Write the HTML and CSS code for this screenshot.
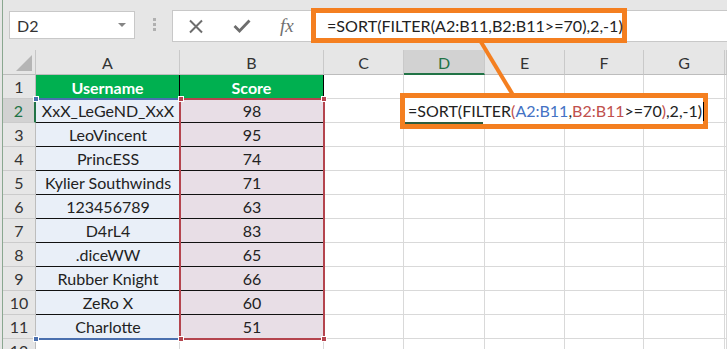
FILE: index.html
```html
<!DOCTYPE html>
<html lang="en">
<head>
    <meta charset="UTF-8">
    <title>SORT FILTER</title>
    <link rel="stylesheet" href="styles.css">
</head>
<body>
    <div class="app">
        <!-- name box + formula bar -->
        <div class="toolbar">
            <div class="name-box">
                <span>D2</span>
                <span class="caret"></span>
            </div>
            <div class="grip"><i></i><i></i><i></i></div>
            <div class="formula-bar">
                <div class="fx-tools">
                    <svg width="16" height="15" viewBox="0 0 16 15"><path d="M2 1.5 L14 13.5 M14 1.5 L2 13.5" stroke="#6d6d6d" stroke-width="2" fill="none"/></svg>
                    <svg width="18" height="14" viewBox="0 0 18 14"><path d="M1.5 7 L6.5 12 L16.5 1.5" stroke="#6d6d6d" stroke-width="2.8" fill="none"/></svg>
                    <span class="fx">fx</span>
                </div>
                <div class="formula-box">=SORT(FILTER(A2:B11,B2:B11&gt;=70),2,-1)</div>
            </div>
        </div>

        <!-- worksheet -->
        <div class="sheet">
            <div class="grid">
                <div class="corner"><span class="tri"></span></div>
                <div class="ch">A</div><div class="ch">B</div><div class="ch">C</div>
                <div class="ch sel">D</div><div class="ch">E</div><div class="ch">F</div><div class="ch">G</div><div class="ch"></div>

                <div class="rh">1</div>
                <div class="head">Username</div><div class="head">Score</div>
                <div class="c"></div><div class="c"></div><div class="c"></div><div class="c"></div><div class="c"></div><div class="c"></div>

                <div class="rh sel">2</div>
                <div class="name">XxX_LeGeND_XxX</div><div class="score">98</div>
                <div class="c"></div><div class="c"></div><div class="c"></div><div class="c"></div><div class="c"></div><div class="c"></div>

                <div class="rh">3</div>
                <div class="name">LeoVincent</div><div class="score">95</div>
                <div class="c"></div><div class="c"></div><div class="c"></div><div class="c"></div><div class="c"></div><div class="c"></div>

                <div class="rh">4</div>
                <div class="name">PrincESS</div><div class="score">74</div>
                <div class="c"></div><div class="c"></div><div class="c"></div><div class="c"></div><div class="c"></div><div class="c"></div>

                <div class="rh">5</div>
                <div class="name">Kylier Southwinds</div><div class="score">71</div>
                <div class="c"></div><div class="c"></div><div class="c"></div><div class="c"></div><div class="c"></div><div class="c"></div>

                <div class="rh">6</div>
                <div class="name">123456789</div><div class="score">63</div>
                <div class="c"></div><div class="c"></div><div class="c"></div><div class="c"></div><div class="c"></div><div class="c"></div>

                <div class="rh">7</div>
                <div class="name">D4rL4</div><div class="score">83</div>
                <div class="c"></div><div class="c"></div><div class="c"></div><div class="c"></div><div class="c"></div><div class="c"></div>

                <div class="rh">8</div>
                <div class="name">.diceWW</div><div class="score">65</div>
                <div class="c"></div><div class="c"></div><div class="c"></div><div class="c"></div><div class="c"></div><div class="c"></div>

                <div class="rh">9</div>
                <div class="name">Rubber Knight</div><div class="score">66</div>
                <div class="c"></div><div class="c"></div><div class="c"></div><div class="c"></div><div class="c"></div><div class="c"></div>

                <div class="rh">10</div>
                <div class="name">ZeRo X</div><div class="score">60</div>
                <div class="c"></div><div class="c"></div><div class="c"></div><div class="c"></div><div class="c"></div><div class="c"></div>

                <div class="rh">11</div>
                <div class="name">Charlotte</div><div class="score">51</div>
                <div class="c"></div><div class="c"></div><div class="c"></div><div class="c"></div><div class="c"></div><div class="c"></div>

                <div class="rh">12</div>
                <div class="c"></div><div class="c"></div>
                <div class="c"></div><div class="c"></div><div class="c"></div><div class="c"></div><div class="c"></div><div class="c"></div>
            </div>

            <!-- range highlights while editing -->
            <div class="ref ref-blue">
                <span class="handle tl"></span><span class="handle bl"></span>
            </div>
            <div class="ref ref-red">
                <span class="handle tl"></span><span class="handle tr"></span>
                <span class="handle bl"></span><span class="handle br"></span>
            </div>
        </div>

        <!-- callout -->
        <svg class="connector" width="727" height="349"><line x1="481" y1="42" x2="513" y2="95" stroke="#f47f20" stroke-width="4"/></svg>
        <div class="edit-box">
            <div class="edit-text">=SORT(FILTER<span class="r">(</span><span class="b">A2:B11</span>,<span class="r">B2:B11</span>&gt;=70<span class="r">)</span>,2,-1)<span class="cursor"></span></div>
        </div>
    </div>
</body>
</html>
```

FILE: styles.css
```css
* {
    margin: 0;
    padding: 0;
    box-sizing: border-box;
}

body {
    overflow: hidden;
    background: #ffffff;
    font-family: "Lato", "Liberation Sans", sans-serif;
    color: #222;
}

.app {
    position: relative;
    width: 727px;
    height: 349px;
    padding-left: 3px;
    background: linear-gradient(to right, #e6e6e6 0, #e6e6e6 2px, #8aa790 2px, #8aa790 3px, transparent 3px);
    overflow: hidden;
}

/* toolbar */
.toolbar {
    display: flex;
    align-items: flex-start;
    height: 50px;
    padding-left: 6px;
    background: #e6e6e6;
}

.name-box {
    display: flex;
    align-items: center;
    justify-content: space-between;
    width: 126px;
    height: 28px;
    margin-top: 11px;
    padding: 0 8px 0 7px;
    background: #fff;
    border: 1px solid #c8c8c8;
    font-size: 16px;
    color: #333;
}

.caret {
    width: 0;
    height: 0;
    border-left: 4px solid transparent;
    border-right: 4px solid transparent;
    border-top: 4px solid #858585;
}

.grip {
    display: flex;
    flex-direction: column;
    gap: 2px;
    margin: 18px 0 0 18px;
}

.grip i {
    display: block;
    width: 3px;
    height: 3px;
    background: #b0b0b0;
}

.formula-bar {
    display: flex;
    align-items: center;
    flex: 1;
    height: 32px;
    margin: 10px 0 0 16px;
    background: #fff;
    border: 1px solid #c8c8c8;
    border-right: none;
}

.fx-tools {
    display: flex;
    align-items: center;
    width: 138px;
    padding-left: 15px;
    gap: 29px;
}

.fx {
    font-family: "Liberation Serif", serif;
    font-style: italic;
    font-size: 19px;
    color: #707070;
}

.formula-box {
    height: 35px;
    margin: -2px 0 -1px 0;
    padding: 0 0 0 11px;
    width: 316px;
    border: 5px solid #f47f20;
    background: #fff;
    font-size: 16.1px;
    line-height: 25px;
    color: #222;
    white-space: nowrap;
}

/* sheet */
.sheet {
    position: relative;
}

.grid {
    display: grid;
    grid-template-columns: 33px 144px 144px 80px 81px 80px 79px 81px 2px;
    grid-template-rows: 25px repeat(12, 24px);
    font-size: 16px;
}

.grid > div {
    display: flex;
    align-items: center;
    justify-content: center;
    white-space: nowrap;
    overflow: hidden;
}

.corner {
    position: relative;
    background: #e6e6e6;
    border-right: 1px solid #c6c6c6;
    border-bottom: 1px solid #bdbdbd;
}

.tri {
    position: absolute;
    right: 3px;
    bottom: 3px;
    width: 0;
    height: 0;
    border-left: 16px solid transparent;
    border-bottom: 16px solid #b5b5b5;
}

.ch {
    background: #e6e6e6;
    border-right: 1px solid #c9c9c9;
    border-bottom: 1px solid #bdbdbd;
    color: #333;
    padding-top: 1px;
}

.ch.sel {
    background: #d2d2d2;
    color: #217346;
    border-bottom: 2px solid #217346;
}

.rh {
    background: #e6e6e6;
    border-right: 1px solid #bdbdbd;
    border-bottom: 1px solid #cbcbcb;
    color: #333;
}

.rh.sel {
    background: #d2d2d2;
    color: #217346;
    border-right: 2px solid #217346;
}

.c {
    border-right: 1px solid #d9d9d9;
    border-bottom: 1px solid #d9d9d9;
}

.head {
    background: #00b050;
    color: #fff;
    font-weight: bold;
    border-right: 1px solid #000;
}

.name,
.score {
    border-bottom: 1px solid #111;
    color: #222;
}

.name {
    background: #e9eff8;
}

.score {
    background: #e8dee6;
}

/* reference ranges */
.ref {
    position: absolute;
    pointer-events: none;
}

.ref-blue {
    left: 33px;
    top: 48px;
    width: 146px;
    height: 242px;
    border-top: 2px solid #4a6fae;
    border-bottom: 2px solid #4a6fae;
}

.ref-red {
    left: 176px;
    top: 48px;
    width: 146px;
    height: 242px;
    border: 2px solid #b4444e;
}

.handle {
    position: absolute;
    width: 6px;
    height: 6px;
    border: 1px solid #fff;
}

.ref-blue .handle { background: #4a6fae; }
.ref-red .handle { background: #b4444e; }

.handle.tl { left: -3px; top: -4px; }
.handle.tr { right: -4px; top: -4px; }
.handle.bl { left: -3px; bottom: -4px; }
.handle.br { right: -4px; bottom: -4px; }

/* callout */
.connector {
    position: absolute;
    left: 0;
    top: 0;
}

.edit-box {
    position: absolute;
    left: 400px;
    top: 93px;
    width: 308px;
    height: 36px;
    border: 5px solid #f47f20;
    background: #fff;
}

.edit-text {
    position: relative;
    height: 100%;
    padding-left: 3px;
    font-size: 16px;
    line-height: 26px;
    color: #222;
    white-space: nowrap;
}

.edit-text::after {
    content: "";
    position: absolute;
    left: 0;
    bottom: 0;
    width: 78px;
    height: 2px;
    background: #2f5d3e;
}

.edit-text .b { color: #4472c4; }
.edit-text .r { color: #c0504d; }

.cursor {
    display: inline-block;
    width: 1px;
    height: 19px;
    margin-left: 1px;
    vertical-align: -4px;
    background: #000;
}
```
